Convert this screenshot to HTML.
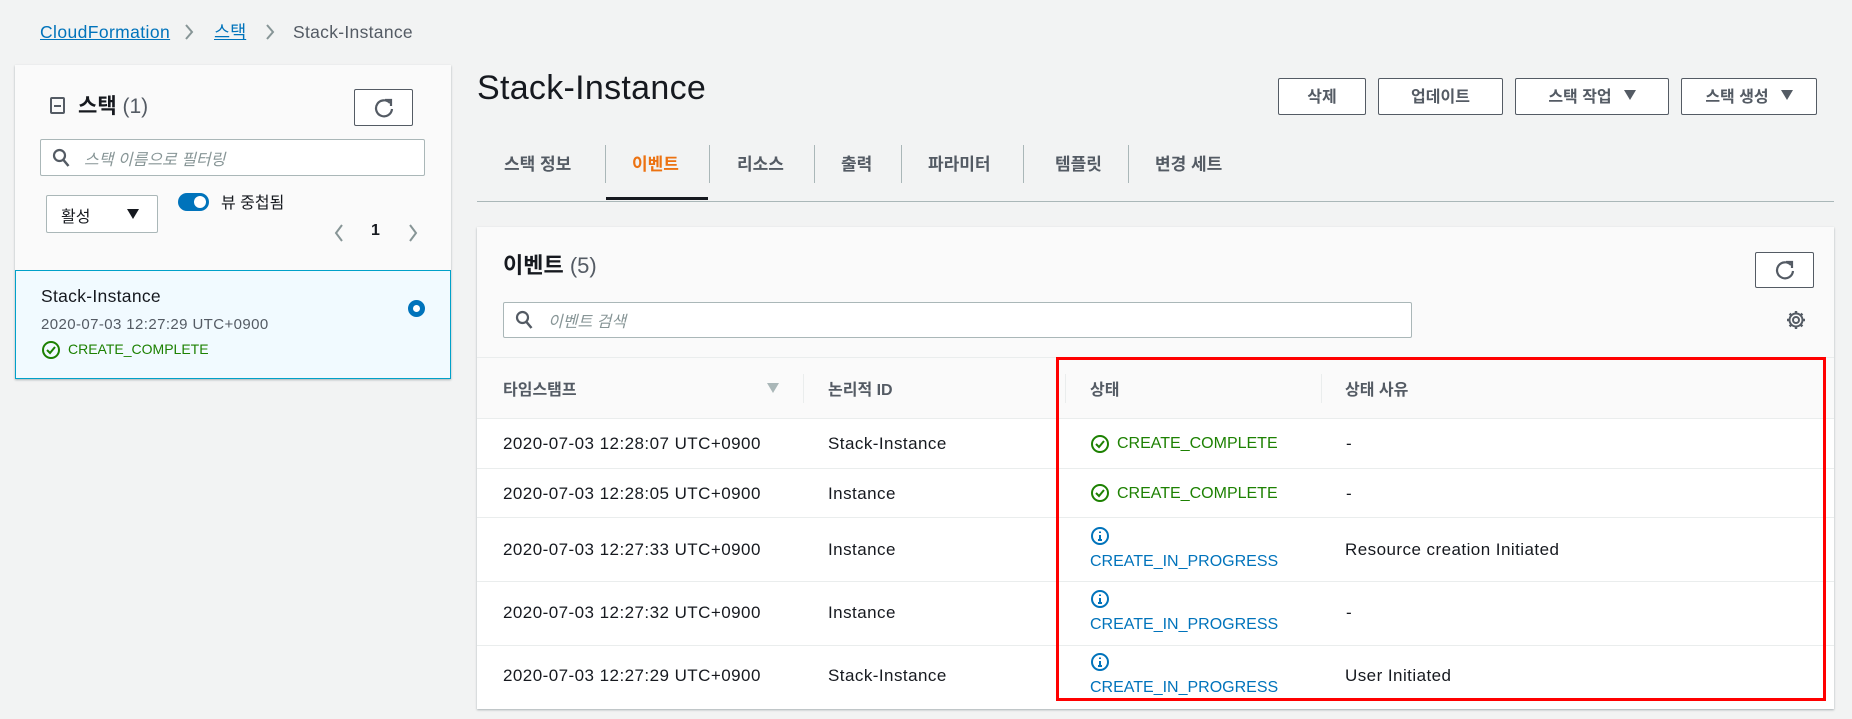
<!DOCTYPE html>
<html><head><meta charset="utf-8"><style>
*{box-sizing:border-box;margin:0;padding:0}
body{width:1852px;height:719px;overflow:hidden;background:#f2f3f3;font-family:"Liberation Sans","Noto Sans CJK KR",sans-serif;color:#16191f;font-size:16px;position:relative}
.a{position:absolute;white-space:nowrap}
.d{font-size:17px;letter-spacing:.45px}
.btn{position:absolute;border:1px solid #545b64;border-radius:2px;background:#fff;font-weight:bold;font-size:16px;color:#545b64;display:flex;align-items:center;justify-content:center;gap:12px;padding-bottom:3px}
.tri{display:inline-block;width:0;height:0;border-left:6px solid transparent;border-right:6px solid transparent;border-top:10px solid #545b64}
.tab{position:absolute;top:150px;font-weight:bold;color:#545b64;font-size:17px}
.vd{position:absolute;width:1px;background:#aab7b8}
.hl{position:absolute;height:1px;background:#eaeded}
.g{color:#1d8102}.b{color:#0073bb}
</style></head><body>
<div class="a" style="left:40px;top:22px;color:#0073bb;text-decoration:underline;font-size:17.5px;letter-spacing:.4px">CloudFormation</div>
<svg class="a" style="left:184px;top:23px" width="10" height="18"><path d="M2 2l6 7-6 7" stroke="#879596" stroke-width="2" fill="none"/></svg>
<div class="a" style="left:214px;top:19px;color:#0073bb;text-decoration:underline;font-size:17.5px">스택</div>
<svg class="a" style="left:265px;top:23px" width="10" height="18"><path d="M2 2l6 7-6 7" stroke="#879596" stroke-width="2" fill="none"/></svg>
<div class="a" style="left:293px;top:22px;color:#545b64;font-size:17.5px;letter-spacing:.3px">Stack-Instance</div>

<!-- left panel -->
<div class="a" style="left:15px;top:65px;width:436px;height:314px;background:#fafafa;box-shadow:0 1px 2px rgba(0,28,36,.3)"></div>
<div class="a" style="left:50px;top:97px;width:15px;height:17px;border:2px solid #545b64;border-radius:2px"></div>
<div class="a" style="left:54px;top:105px;width:7px;height:2px;background:#545b64"></div>
<div class="a" style="left:78px;top:90px;font-size:21px;font-weight:bold">스택 <span style="font-weight:normal;color:#545b64">(1)</span></div>
<div class="btn" style="left:354px;top:89px;width:59px;height:37px;padding:0"><svg width="22" height="22" viewBox="0 0 22 22"><path d="M17 6A8 8 0 1 0 19 12" stroke="#545b64" stroke-width="2.2" fill="none"/><path d="M12 3h6v6" stroke="#545b64" stroke-width="2.2" fill="none"/></svg></div>
<div class="a" style="left:40px;top:139px;width:385px;height:37px;background:#fff;border:1px solid #aab7b8;border-radius:2px"></div>
<svg class="a" style="left:52px;top:148px" width="18" height="20"><circle cx="7.5" cy="7.5" r="5.5" stroke="#545b64" stroke-width="2.2" fill="none"/><path d="M11.5 12l5 6" stroke="#545b64" stroke-width="2.5"/></svg>
<div class="a" style="left:84px;top:146px;color:#879596;font-style:italic;font-size:16px">스택 이름으로 필터링</div>
<div class="a" style="left:46px;top:195px;width:112px;height:38px;background:#fff;border:1px solid #aab7b8;border-radius:2px"></div>
<div class="a" style="left:61px;top:203px;font-size:16px">활성</div>
<div class="a tri" style="left:127px;top:209px;border-top-color:#16191f"></div>
<div class="a" style="left:178px;top:193px;width:31px;height:18px;border-radius:9px;background:#0073bb"></div>
<div class="a" style="left:194px;top:196px;width:12px;height:12px;border-radius:6px;background:#fff"></div>
<div class="a" style="left:221px;top:189px;font-size:16px">뷰 중첩됨</div>
<svg class="a" style="left:333px;top:223px" width="12" height="20"><path d="M9 2l-6 8 6 8" stroke="#879596" stroke-width="2" fill="none"/></svg>
<div class="a" style="left:371px;top:222px;font-weight:bold;font-size:16px">1</div>
<svg class="a" style="left:407px;top:223px" width="12" height="20"><path d="M3 2l6 8-6 8" stroke="#879596" stroke-width="2" fill="none"/></svg>
<div class="a" style="left:15px;top:270px;width:436px;height:109px;background:#f1faff;border:1px solid #00a1c9"></div>
<div class="a" style="left:41px;top:286px;font-size:17.5px;letter-spacing:.3px">Stack-Instance</div>
<div class="a" style="left:41px;top:316px;font-size:15px;letter-spacing:.4px;color:#545b64">2020-07-03 12:27:29 UTC+0900</div>
<svg class="a" style="left:41px;top:340px" width="20" height="20"><circle cx="10" cy="10" r="8" stroke="#1d8102" stroke-width="2" fill="none"/><path d="M6 10l3 3 5-6" stroke="#1d8102" stroke-width="2" fill="none"/></svg>
<div class="a g" style="left:68px;top:341px;font-size:14px">CREATE_COMPLETE</div>
<div class="a" style="left:408px;top:300px;width:17px;height:17px;border-radius:50%;border:5px solid #0073bb;background:#fff"></div>

<!-- main -->
<div class="a" style="left:477px;top:69px;font-size:34px;letter-spacing:.3px">Stack-Instance</div>
<div class="btn" style="left:1278px;top:78px;width:88px;height:37px">삭제</div>
<div class="btn" style="left:1378px;top:78px;width:125px;height:37px">업데이트</div>
<div class="btn" style="left:1515px;top:78px;width:154px;height:37px">스택 작업 <span class="tri"></span></div>
<div class="btn" style="left:1681px;top:78px;width:136px;height:37px">스택 생성 <span class="tri"></span></div>

<div class="tab" style="left:504px">스택 정보</div>
<div class="tab" style="left:632px;color:#ec7211">이벤트</div>
<div class="tab" style="left:737px">리소스</div>
<div class="tab" style="left:841px">출력</div>
<div class="tab" style="left:928px">파라미터</div>
<div class="tab" style="left:1055px">템플릿</div>
<div class="tab" style="left:1155px">변경 세트</div>
<div class="vd" style="left:605px;top:145px;height:38px"></div>
<div class="vd" style="left:709px;top:145px;height:38px"></div>
<div class="vd" style="left:814px;top:145px;height:38px"></div>
<div class="vd" style="left:901px;top:145px;height:38px"></div>
<div class="vd" style="left:1023px;top:145px;height:38px"></div>
<div class="vd" style="left:1128px;top:145px;height:38px"></div>
<div class="a" style="left:606px;top:197px;width:102px;height:3px;background:#16191f"></div>
<div class="a" style="left:477px;top:201px;width:1357px;height:1px;background:#aab7b8"></div>

<div class="a" style="left:477px;top:227px;width:1357px;height:482px;background:#fff;box-shadow:0 1px 2px rgba(0,28,36,.3)"></div>
<div class="a" style="left:477px;top:227px;width:1357px;height:191px;background:#fafafa"></div>
<div class="a" style="left:503px;top:248px;font-size:22px;font-weight:bold">이벤트 <span style="font-weight:normal;color:#545b64">(5)</span></div>
<div class="btn" style="left:1755px;top:252px;width:59px;height:36px;padding:0"><svg width="22" height="22" viewBox="0 0 22 22"><path d="M17 6A8 8 0 1 0 19 12" stroke="#545b64" stroke-width="2.2" fill="none"/><path d="M12 3h6v6" stroke="#545b64" stroke-width="2.2" fill="none"/></svg></div>
<div class="a" style="left:503px;top:302px;width:909px;height:36px;background:#fff;border:1px solid #aab7b8;border-radius:2px"></div>
<svg class="a" style="left:515px;top:310px" width="18" height="20"><circle cx="7.5" cy="7.5" r="5.5" stroke="#545b64" stroke-width="2.2" fill="none"/><path d="M11.5 12l5 6" stroke="#545b64" stroke-width="2.5"/></svg>
<div class="a" style="left:548px;top:308px;color:#879596;font-style:italic;font-size:16px">이벤트 검색</div>
<svg class="a" style="left:1785px;top:309px" width="22" height="22" viewBox="0 0 22 22"><circle cx="11" cy="11" r="3" stroke="#545b64" stroke-width="2" fill="none"/><path d="M11 2v3M11 17v3M2 11h3M17 11h3M4.6 4.6l2.2 2.2M15.2 15.2l2.2 2.2M4.6 17.4l2.2-2.2M15.2 6.8l2.2-2.2" stroke="#545b64" stroke-width="2.4"/><circle cx="11" cy="11" r="6.5" stroke="#545b64" stroke-width="2" fill="none"/></svg>

<div class="hl" style="left:477px;top:357px;width:1357px"></div>
<div class="a" style="left:503px;top:376px;font-weight:bold;color:#545b64;font-size:16px">타임스탬프</div>
<div class="a" style="left:767px;top:383px;width:0;height:0;border-left:6px solid transparent;border-right:6px solid transparent;border-top:10px solid #aab7b8"></div>
<div class="vd" style="left:803px;top:374px;height:29px;background:#eaeded"></div>
<div class="a" style="left:828px;top:376px;font-weight:bold;color:#545b64;font-size:16px">논리적 ID</div>
<div class="vd" style="left:1065px;top:374px;height:29px;background:#eaeded"></div>
<div class="a" style="left:1090px;top:376px;font-weight:bold;color:#545b64;font-size:16px">상태</div>
<div class="vd" style="left:1321px;top:374px;height:29px;background:#eaeded"></div>
<div class="a" style="left:1345px;top:376px;font-weight:bold;color:#545b64;font-size:16px">상태 사유</div>

<div class="hl" style="left:477px;top:418px;width:1357px"></div>
<div class="hl" style="left:477px;top:468px;width:1357px"></div>
<div class="hl" style="left:477px;top:517px;width:1357px"></div>
<div class="hl" style="left:477px;top:581px;width:1357px"></div>
<div class="hl" style="left:477px;top:645px;width:1357px"></div>

<div class="a d" style="left:503px;top:434px">2020-07-03 12:28:07 UTC+0900</div>
<div class="a d" style="left:828px;top:434px">Stack-Instance</div>
<svg class="a" style="left:1090px;top:434px" width="20" height="20"><circle cx="10" cy="10" r="8" stroke="#1d8102" stroke-width="2" fill="none"/><path d="M6 10l3 3 5-6" stroke="#1d8102" stroke-width="2" fill="none"/></svg>
<div class="a g" style="left:1117px;top:435px">CREATE_COMPLETE</div>
<div class="a d" style="left:1346px;top:434px">-</div>

<div class="a d" style="left:503px;top:484px">2020-07-03 12:28:05 UTC+0900</div>
<div class="a d" style="left:828px;top:484px">Instance</div>
<svg class="a" style="left:1090px;top:483px" width="20" height="20"><circle cx="10" cy="10" r="8" stroke="#1d8102" stroke-width="2" fill="none"/><path d="M6 10l3 3 5-6" stroke="#1d8102" stroke-width="2" fill="none"/></svg>
<div class="a g" style="left:1117px;top:485px">CREATE_COMPLETE</div>
<div class="a d" style="left:1346px;top:484px">-</div>

<div class="a d" style="left:503px;top:540px">2020-07-03 12:27:33 UTC+0900</div>
<div class="a d" style="left:828px;top:540px">Instance</div>
<svg class="a" style="left:1090px;top:526px" width="20" height="20"><circle cx="10" cy="10" r="8" stroke="#0073bb" stroke-width="2" fill="none"/><path d="M10 9v5M8 14h4M10 5.5v1.5" stroke="#0073bb" stroke-width="2"/></svg>
<div class="a b" style="left:1090px;top:553px">CREATE_IN_PROGRESS</div>
<div class="a d" style="left:1345px;top:540px">Resource creation Initiated</div>

<div class="a d" style="left:503px;top:603px">2020-07-03 12:27:32 UTC+0900</div>
<div class="a d" style="left:828px;top:603px">Instance</div>
<svg class="a" style="left:1090px;top:589px" width="20" height="20"><circle cx="10" cy="10" r="8" stroke="#0073bb" stroke-width="2" fill="none"/><path d="M10 9v5M8 14h4M10 5.5v1.5" stroke="#0073bb" stroke-width="2"/></svg>
<div class="a b" style="left:1090px;top:616px">CREATE_IN_PROGRESS</div>
<div class="a d" style="left:1346px;top:603px">-</div>

<div class="a d" style="left:503px;top:666px">2020-07-03 12:27:29 UTC+0900</div>
<div class="a d" style="left:828px;top:666px">Stack-Instance</div>
<svg class="a" style="left:1090px;top:652px" width="20" height="20"><circle cx="10" cy="10" r="8" stroke="#0073bb" stroke-width="2" fill="none"/><path d="M10 9v5M8 14h4M10 5.5v1.5" stroke="#0073bb" stroke-width="2"/></svg>
<div class="a b" style="left:1090px;top:679px">CREATE_IN_PROGRESS</div>
<div class="a d" style="left:1345px;top:666px">User Initiated</div>

<div class="a" style="left:1056px;top:357px;width:770px;height:344px;border:3px solid #f00"></div>
</body></html>
